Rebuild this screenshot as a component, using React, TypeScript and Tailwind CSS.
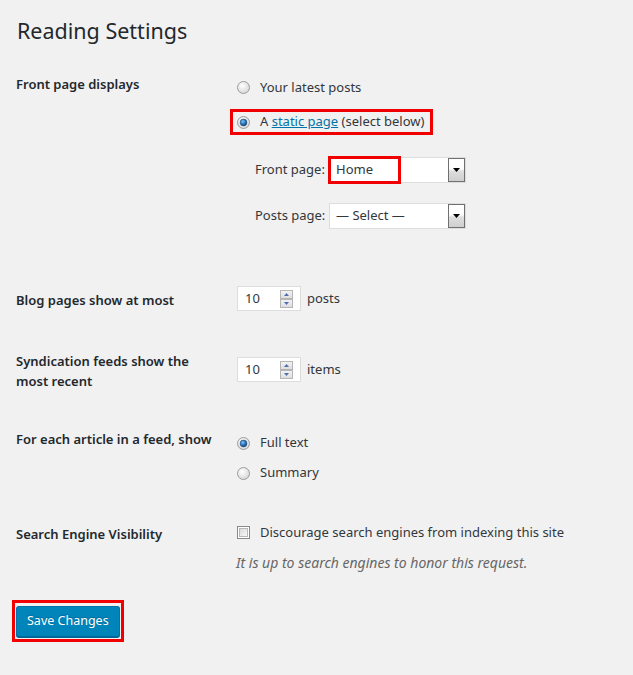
import React from 'react';

const Radio = ({ checked = false }: { checked?: boolean }) => (
  <svg width="13" height="13" viewBox="0 0 13 13" className="shrink-0">
    <defs>
      <radialGradient id="rg-off" cx="40%" cy="35%" r="70%">
        <stop offset="0%" stopColor="#ffffff" />
        <stop offset="100%" stopColor="#d4d4d4" />
      </radialGradient>
      <radialGradient id="rg-on" cx="40%" cy="35%" r="70%">
        <stop offset="0%" stopColor="#7fc4f4" />
        <stop offset="60%" stopColor="#1e6fb8" />
        <stop offset="100%" stopColor="#0b3d6e" />
      </radialGradient>
    </defs>
    <circle cx="6.5" cy="6.5" r="6" fill="url(#rg-off)" stroke="#9c9c9c" strokeWidth="1" />
    {checked && <circle cx="6.5" cy="6.5" r="3.4" fill="url(#rg-on)" stroke="#2a4f78" strokeWidth="0.6" />}
  </svg>
);

const Checkbox = () => (
  <svg width="13" height="13" viewBox="0 0 13 13" className="shrink-0">
    <defs>
      <linearGradient id="cb-g" x1="0" y1="0" x2="1" y2="1">
        <stop offset="0%" stopColor="#d8d8d8" />
        <stop offset="100%" stopColor="#fafafa" />
      </linearGradient>
    </defs>
    <rect x="0.5" y="0.5" width="12" height="12" fill="#ffffff" stroke="#8a8a8a" />
    <rect x="2.5" y="2.5" width="8" height="8" fill="url(#cb-g)" stroke="#b8b8b8" />
  </svg>
);

const Spinner = () => (
  <svg width="13" height="18" viewBox="0 0 13 18" className="shrink-0">
    <defs>
      <linearGradient id="sp-g" x1="0" y1="0" x2="0" y2="1">
        <stop offset="0%" stopColor="#f4f4f4" />
        <stop offset="100%" stopColor="#dcdcdc" />
      </linearGradient>
    </defs>
    <rect x="0.5" y="0.5" width="12" height="8" fill="url(#sp-g)" stroke="#b5b5b5" />
    <rect x="0.5" y="9.5" width="12" height="8" fill="url(#sp-g)" stroke="#b5b5b5" />
    <path d="M4 6 L6.5 3 L9 6 Z" fill="#4d6fae" />
    <path d="M4 12 L6.5 15 L9 12 Z" fill="#4d6fae" />
  </svg>
);

const SelectArrow = () => (
  <div className="flex h-full w-[17px] shrink-0 items-center justify-center border border-[#707070] bg-[linear-gradient(#ffffff_0%,#fdfdfd_45%,#dedede_55%,#cfcfcf_100%)]">
    <svg width="7" height="4" viewBox="0 0 7 4">
      <path d="M0 0 L7 0 L3.5 4 Z" fill="#000" />
    </svg>
  </div>
);

const Select = ({ value, highlight = false }: { value: string; highlight?: boolean }) => (
  <div className="relative flex h-[26px] w-[137px] items-stretch border border-[#dddddd] bg-white">
    <span className="flex flex-1 items-center pl-[6px] text-[13px] text-[#32373c]">{value}</span>
    <SelectArrow />
    {highlight && (
      <div className="absolute -left-[2px] -top-[2px] h-[28px] w-[73px] border-[3px] border-[#f00000]" />
    )}
  </div>
);

const NumberInput = ({ value }: { value: string }) => (
  <div className="flex h-[25px] w-[64px] items-center border border-[#dddddd] bg-white pl-[7px] pr-[7px]">
    <span className="flex-1 text-[13px] text-[#32373c]">{value}</span>
    <Spinner />
  </div>
);

const Label = ({ children, className = '' }: { children: React.ReactNode; className?: string }) => (
  <div className={`w-[221px] shrink-0 pr-[21px] text-[13px] font-semibold leading-[20px] text-[#23282d] ${className}`}>
    {children}
  </div>
);

export default function App() {
  return (
    <div className="min-h-screen bg-[#f1f1f1] px-[16px] pt-[16px] font-['Noto_Sans',sans-serif] text-[13px] text-[#32373c]">
      <h1 className="pl-[1px] text-[21.5px] font-normal leading-[29px] text-[#23282d]">Reading Settings</h1>

      {/* Front page displays */}
      <div className="mt-[29px] flex">
        <Label>Front page displays</Label>
        <div>
          <label className="flex h-[26px] items-center gap-[10px] pt-[1px]">
            <Radio />
            <span>Your latest posts</span>
          </label>
          <label className="-ml-[7px] mt-[9px] flex h-[26px] w-[203px] items-center gap-[10px] border-[3px] border-[#f00000] pl-[4px]">
            <Radio checked />
            <span>
              A <span className="text-[#0073aa] underline">static page</span> (select below)
            </span>
          </label>
          <div className="mt-[22px] pl-[18px]">
            <div className="flex items-center">
              <span className="w-[74px] shrink-0">Front page:</span>
              <Select value="Home" highlight />
            </div>
            <div className="mt-[20px] flex items-center">
              <span className="w-[74px] shrink-0">Posts page:</span>
              <Select value="— Select —" />
            </div>
          </div>
        </div>
      </div>

      {/* Blog pages */}
      <div className="mt-[57px] flex">
        <Label className="pt-[4px]">Blog pages show at most</Label>
        <div className="flex items-center gap-[6px]">
          <NumberInput value="10" />
          <span>posts</span>
        </div>
      </div>

      {/* Syndication */}
      <div className="mt-[40px] flex">
        <Label>Syndication feeds show the most recent</Label>
        <div className="flex items-center gap-[6px] self-start pt-[6px]">
          <NumberInput value="10" />
          <span>items</span>
        </div>
      </div>

      {/* Feed article */}
      <div className="mt-[38px] flex">
        <Label>For each article in a feed, show</Label>
        <div className="pt-[1px]">
          <label className="flex h-[26px] items-center gap-[10px]">
            <Radio checked />
            <span>Full text</span>
          </label>
          <label className="mt-[4px] flex h-[26px] items-center gap-[10px]">
            <Radio />
            <span>Summary</span>
          </label>
        </div>
      </div>

      {/* Search engine */}
      <div className="mt-[36px] flex">
        <Label className="pt-[2px]">Search Engine Visibility</Label>
        <div>
          <label className="flex h-[20px] items-center gap-[10px] pt-[1px]">
            <Checkbox />
            <span>Discourage search engines from indexing this site</span>
          </label>
          <p className="mt-[11px] -ml-[1px] text-[14px] italic leading-[20px] text-[#666666]">
            It is up to search engines to honor this request.
          </p>
        </div>
      </div>

      <div className="-ml-[4px] mt-[27px] inline-block border-[3px] border-[#f00000] px-[1px] pb-[2px] pt-[3px]">
        <button className="h-[31px] rounded-[3px] border border-[#0073aa] border-b-[#006799] bg-[#0085ba] px-[10px] text-[12.5px] text-white shadow-[0_1px_0_#006799] [text-shadow:0_-1px_1px_#006799]">
          Save Changes
        </button>
      </div>
    </div>
  );
}
